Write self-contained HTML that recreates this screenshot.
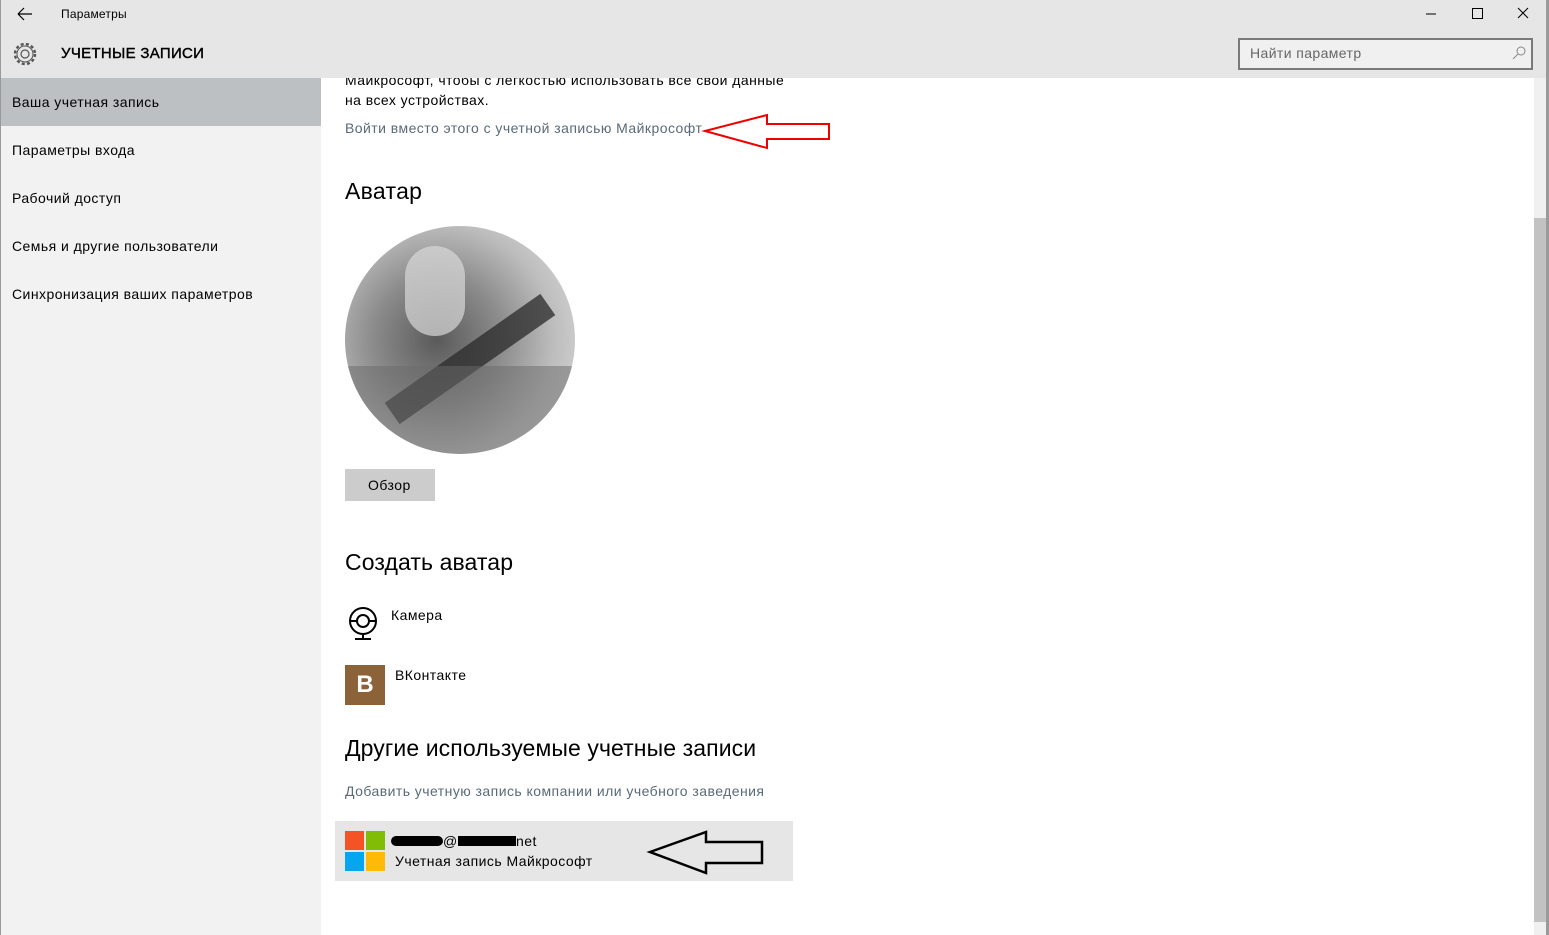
<!DOCTYPE html>
<html><head><meta charset="utf-8"><style>
*{margin:0;padding:0;box-sizing:border-box}
body{width:1549px;height:935px;position:relative;overflow:hidden;background:#fff;font-family:"Liberation Sans","DejaVu Sans",sans-serif;color:#000}
.a{position:absolute;white-space:nowrap}
.t{font-size:14px;letter-spacing:0.45px}
</style></head><body>
<div class="a" style="left:0;top:0;width:1549px;height:78px;background:#e6e6e6"></div>
<div class="a" style="left:0;top:78px;width:321px;height:857px;background:#f2f2f2"></div>
<div class="a" style="left:0;top:78px;width:321px;height:48px;background:#bcc0c3"></div>
<div class="a" style="left:1546px;top:0;width:3px;height:935px;background:#9a9a9a"></div>
<div class="a" style="left:0;top:0;width:1px;height:935px;background:#9a9a9a"></div>
<svg class="a" style="left:16px;top:6px" width="18" height="16"><path d="M2 8H16M2 8L8 2M2 8L8 14" stroke="#000" stroke-width="1.2" fill="none"/></svg>
<div class="a" style="left:61px;top:7px;font-size:12px;letter-spacing:0.2px">Параметры</div>
<svg class="a" style="left:1420px;top:6px" width="120" height="16"><path d="M6 8H16" stroke="#000"/><rect x="52.5" y="2.5" width="10" height="10" fill="none" stroke="#000"/><path d="M98 2L108 12M108 2L98 12" stroke="#000"/></svg>
<svg class="a" style="left:12px;top:41px" width="26" height="26" viewBox="0 0 26 26"><circle cx="13" cy="13" r="4" fill="none" stroke="#555" stroke-width="1.2"/><circle cx="13" cy="13" r="10" fill="none" stroke="#555" stroke-width="2.4" stroke-dasharray="3 2.3"/><circle cx="13" cy="13" r="8" fill="#e6e6e6" stroke="#555" stroke-width="1"/><circle cx="13" cy="13" r="4" fill="none" stroke="#555" stroke-width="1.2"/></svg>
<div class="a" style="left:61px;top:45px;font-size:15px;letter-spacing:0.3px;-webkit-text-stroke:0.4px #000">УЧЕТНЫЕ ЗАПИСИ</div>
<div class="a" style="left:1238px;top:38px;width:295px;height:32px;border:2px solid #7a7a7a;background:#f0f0f0"></div>
<div class="a" style="left:1250px;top:45px;font-size:14px;color:#666;letter-spacing:0.4px">Найти параметр</div>
<svg class="a" style="left:1512px;top:46px" width="14" height="14"><circle cx="9" cy="5" r="4" fill="none" stroke="#888"/><path d="M6 8L1 13" stroke="#888"/></svg>
<div class="a t" style="left:12px;top:94px">Ваша учетная запись</div>
<div class="a t" style="left:12px;top:142px">Параметры входа</div>
<div class="a t" style="left:12px;top:190px">Рабочий доступ</div>
<div class="a t" style="left:12px;top:238px">Семья и другие пользователи</div>
<div class="a t" style="left:12px;top:286px">Синхронизация ваших параметров</div>
<div class="a t" style="left:345px;top:72px;clip-path:inset(6px 0 0 0)">Майкрософт, чтобы с легкостью использовать все свои данные</div>
<div class="a t" style="left:345px;top:92px">на всех устройствах.</div>
<div class="a t" style="left:345px;top:120px;color:#5a6a78">Войти вместо этого с учетной записью Майкрософт</div>
<svg class="a" style="left:700px;top:112px" width="135" height="38"><path d="M5 19L67 3V12H129V27H67V36Z" fill="none" stroke="#e00" stroke-width="2"/></svg>
<div class="a" style="left:345px;top:178px;font-size:23px;letter-spacing:0.3px">Аватар</div>
<div class="a" style="left:345px;top:226px;width:230px;height:228px;border-radius:50%;overflow:hidden;background:radial-gradient(circle at 40% 50%,#5a5a5a 0%,#8a8a8a 35%,#bdbdbd 65%,#e0e0e0 100%)">
<div style="position:absolute;left:60px;top:20px;width:60px;height:90px;background:#d8d8d8;border-radius:30px;opacity:.7"></div>
<div style="position:absolute;left:30px;top:120px;width:190px;height:26px;background:#2a2a2a;transform:rotate(-35deg);opacity:.75"></div>
<div style="position:absolute;left:0;top:140px;width:230px;height:90px;background:#6a6a6a;opacity:.5"></div>
</div>
<div class="a" style="left:345px;top:469px;width:90px;height:32px;background:#cccccc"></div>
<div class="a t" style="left:368px;top:477px">Обзор</div>
<div class="a" style="left:345px;top:549px;font-size:23px;letter-spacing:0.1px">Создать аватар</div>
<svg class="a" style="left:346px;top:606px" width="34" height="36"><circle cx="17" cy="15" r="13" fill="none" stroke="#000" stroke-width="2"/><circle cx="17" cy="15" r="6" fill="none" stroke="#000" stroke-width="2"/><path d="M4 15H11M23 15H30M17 28V33M9 33H25" stroke="#000" stroke-width="2"/></svg>
<div class="a t" style="left:391px;top:607px">Камера</div>
<div class="a" style="left:345px;top:665px;width:40px;height:40px;background:#8c6239;color:#fff;font-weight:bold;font-size:24px;text-align:center;line-height:40px">B</div>
<div class="a t" style="left:395px;top:667px">ВКонтакте</div>
<div class="a" style="left:345px;top:735px;font-size:23px;letter-spacing:0.1px">Другие используемые учетные записи</div>
<div class="a t" style="left:345px;top:783px;color:#5a6a78">Добавить учетную запись компании или учебного заведения</div>
<div class="a" style="left:335px;top:821px;width:458px;height:60px;background:#e6e6e6"></div>
<div class="a" style="left:345px;top:831px;width:19px;height:19px;background:#f35325"></div>
<div class="a" style="left:366px;top:831px;width:19px;height:19px;background:#81bc06"></div>
<div class="a" style="left:345px;top:852px;width:19px;height:19px;background:#05a6f0"></div>
<div class="a" style="left:366px;top:852px;width:19px;height:19px;background:#ffba08"></div>
<div class="a" style="left:391px;top:836px;width:52px;height:10px;background:#000;border-radius:5px"></div>
<div class="a t" style="left:443px;top:833px">@</div>
<div class="a" style="left:458px;top:836px;width:58px;height:10px;background:#000"></div>
<div class="a t" style="left:516px;top:833px">net</div>
<div class="a t" style="left:395px;top:853px">Учетная запись Майкрософт</div>
<svg class="a" style="left:645px;top:828px" width="125" height="50"><path d="M5 24L61 4V14H117V35H61V45Z" fill="none" stroke="#000" stroke-width="2.5"/></svg>
<div class="a" style="left:1534px;top:78px;width:12px;height:857px;background:#f0f0f0"></div>
<div class="a" style="left:1534px;top:218px;width:12px;height:704px;background:#c2c2c2"></div>
</body></html>
